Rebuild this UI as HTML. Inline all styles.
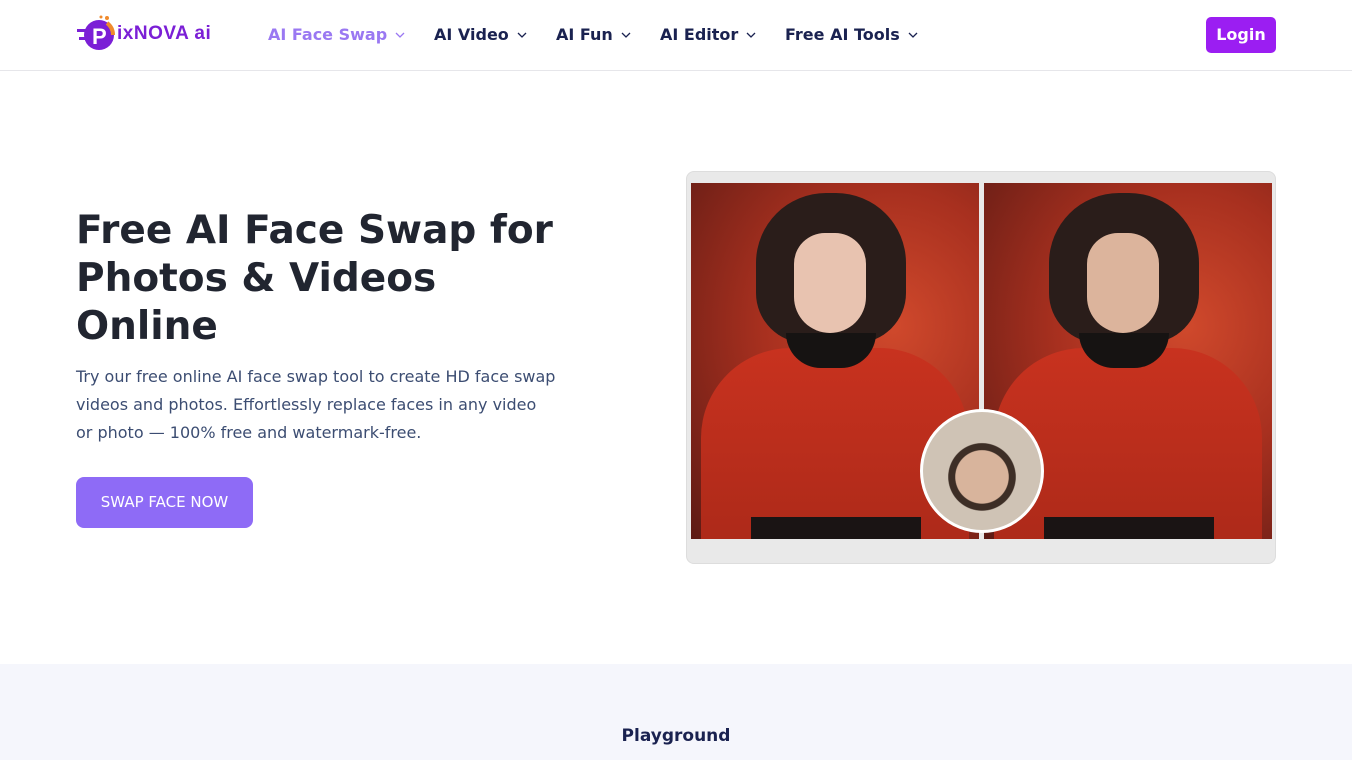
<!DOCTYPE html>
<html><head><meta charset="utf-8"><style>
*{margin:0;padding:0;box-sizing:border-box}
body{width:1352px;height:760px;overflow:hidden;background:#fff;font-family:"DejaVu Sans","Liberation Sans",sans-serif;}
.hdr{height:71px;border-bottom:1px solid #e6e6ea;position:relative}
.logo{position:absolute;left:77px;top:15px;display:flex;align-items:center}
.nav{position:absolute;top:25px;left:0;font-weight:bold;font-size:16px;color:#1a2250;width:1000px;height:20px}
.nav span{position:absolute;display:flex;align-items:center;white-space:nowrap}
.nav span svg{margin-left:8px}
.login{position:absolute;left:1206px;top:17px;width:70px;height:36px;background:#9b1ef2;color:#fff;border-radius:5px;font-weight:bold;font-size:16px;text-align:center;line-height:35px}
h1{position:absolute;left:76px;top:207px;font-size:39px;line-height:48px;color:#212530;font-weight:bold;width:500px}
.p{position:absolute;left:76px;top:363px;width:481px;font-size:16px;line-height:28px;color:#3c4d72}
.btn{position:absolute;left:76px;top:477px;width:177px;height:51px;border-radius:8px;background:#8e6bf6;color:#fff;font-size:15px;text-align:center;line-height:50px}
.panel{position:absolute;left:686px;top:171px;width:590px;height:393px;background:#e9e9e9;border-radius:8px;border:1px solid #ddd}
.ph{position:absolute;top:11px;width:288px;height:356px;overflow:hidden;background:radial-gradient(ellipse at 70% 40%,#d0492c 0%,#a8301f 45%,#5c1a14 100%)}
.ph .body{position:absolute;left:10px;top:165px;width:268px;height:230px;border-radius:90px 90px 0 0;background:linear-gradient(#c8321f,#a82818)}
.ph .belt{position:absolute;left:60px;bottom:0;width:170px;height:22px;background:#1a1414}
.ph .hair{position:absolute;left:65px;top:10px;width:150px;height:150px;border-radius:70px 70px 50px 50px;background:#2a1d1a}
.ph .face{position:absolute;left:103px;top:50px;width:72px;height:100px;border-radius:36px 36px 42px 42px;background:#e8c3b0}
.ph .collar{position:absolute;left:95px;top:150px;width:90px;height:35px;border-radius:0 0 45px 45px;background:#161312}
.circ{position:absolute;left:233px;top:237px;width:124px;height:124px;border-radius:50%;border:3px solid #fff;background:radial-gradient(circle at 50% 55%,#d8b49c 0 30%,#3d2e26 31% 38%,#cfc3b5 39%);overflow:hidden}
.sec{position:absolute;left:0;top:664px;width:1352px;height:96px;background:#f5f6fc}
.sec div{text-align:center;margin-top:62px;font-weight:bold;font-size:17px;color:#1a2250}
</style></head><body>
<div class="hdr">
 <div class="logo">
  <svg width="40" height="38" viewBox="0 0 40 38"><circle cx="22" cy="20" r="15" fill="#7b1fd6"/><path d="M30 8a15 15 0 0 1 6 12" stroke="#f08a2c" stroke-width="4" fill="none"/><circle cx="30" cy="3" r="2" fill="#f08a2c"/><circle cx="24" cy="2" r="1.5" fill="#f08a2c"/><rect x="0" y="14" width="10" height="3" fill="#7b1fd6"/><rect x="2" y="22" width="8" height="3" fill="#7b1fd6"/><text x="15" y="29" font-size="22" font-weight="bold" fill="#fff" font-family="Liberation Sans">P</text></svg>
  <span style="font-family:'Liberation Sans',sans-serif;color:#7b1fd6;font-size:19px;font-weight:bold;letter-spacing:0.5px">ixNOVA ai</span>
 </div>
 <div class="nav">
  <span style="left:268px;color:#9a78f2">AI Face Swap<svg width="10" height="6"><path d="M1 1l4 4 4-4" stroke="#9a78f2" fill="none" stroke-width="1.3"/></svg></span>
  <span style="left:434px">AI Video<svg width="10" height="6"><path d="M1 1l4 4 4-4" stroke="#1a2250" fill="none" stroke-width="1.3"/></svg></span>
  <span style="left:556px">AI Fun<svg width="10" height="6"><path d="M1 1l4 4 4-4" stroke="#1a2250" fill="none" stroke-width="1.3"/></svg></span>
  <span style="left:660px">AI Editor<svg width="10" height="6"><path d="M1 1l4 4 4-4" stroke="#1a2250" fill="none" stroke-width="1.3"/></svg></span>
  <span style="left:785px">Free AI Tools<svg width="10" height="6"><path d="M1 1l4 4 4-4" stroke="#1a2250" fill="none" stroke-width="1.3"/></svg></span>
 </div>
 <div class="login">Login</div>
</div>
<h1>Free AI Face Swap for Photos &amp; Videos Online</h1>
<div class="p">Try our free online AI face swap tool to create HD face swap videos and photos. Effortlessly replace faces in any video or photo — 100% free and watermark-free.</div>
<div class="btn">SWAP FACE NOW</div>
<div class="panel">
 <div class="ph" style="left:4px"><div class="body"></div><div class="belt"></div><div class="hair"></div><div class="face"></div><div class="collar"></div></div>
 <div class="ph" style="left:297px"><div class="body"></div><div class="belt"></div><div class="hair"></div><div class="face" style="background:#dcb49c"></div><div class="collar"></div></div>
 <div class="circ"></div>
</div>
<div class="sec"><div>Playground</div></div>
</body></html>
